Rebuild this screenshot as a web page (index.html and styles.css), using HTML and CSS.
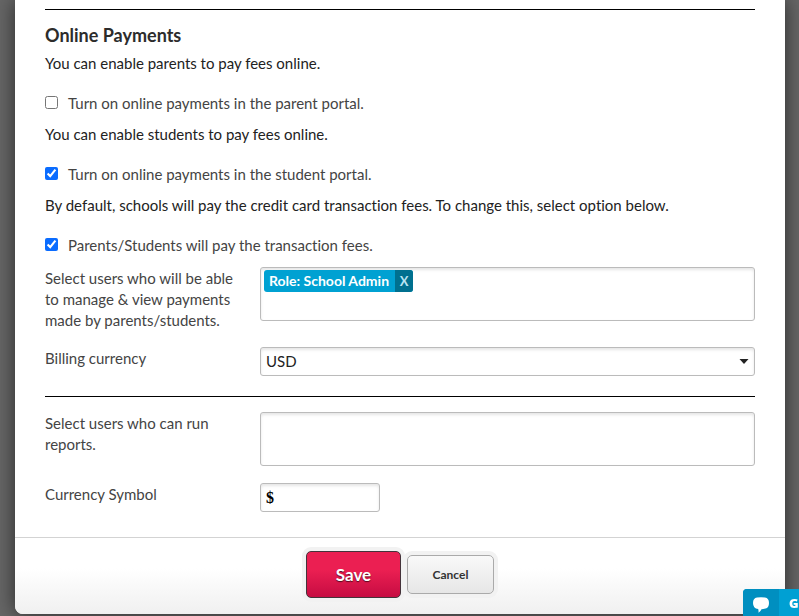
FILE: index.html
```html
<!DOCTYPE html>
<html lang="en">
<head>
    <meta charset="UTF-8">
    <meta name="viewport" content="width=device-width, initial-scale=1.0">
    <title>Online Payments</title>
    <link rel="stylesheet" href="styles.css">
</head>
<body>
    <form class="modal">
        <div class="content">
            <hr class="divider">
            <h2 class="title">Online Payments</h2>

            <p class="info">You can enable parents to pay fees online.</p>
            <label class="check">
                <input type="checkbox" name="parentPortal">
                Turn on online payments in the parent portal.
            </label>

            <p class="info">You can enable students to pay fees online.</p>
            <label class="check">
                <input type="checkbox" name="studentPortal" checked>
                Turn on online payments in the student portal.
            </label>

            <p class="info">By default, schools will pay the credit card transaction fees. To change this, select option below.</p>
            <label class="check">
                <input type="checkbox" name="payFees" checked>
                Parents/Students will pay the transaction fees.
            </label>

            <div class="row">
                <label class="label" for="managers">Select users who will be able to manage &amp; view payments made by parents/students.</label>
                <div class="field users">
                    <span class="tag">Role: School Admin<button type="button" class="remove">X</button></span>
                    <input type="text" id="managers" class="search">
                </div>
            </div>
            <div class="row">
                <label class="label" for="currency">Billing currency</label>
                <div class="select">
                    <select id="currency" class="field">
                        <option>USD</option>
                    </select>
                    <svg class="arrow" width="10" height="5" viewBox="0 0 10 5"><path d="M0.5 0h9L5 5z" fill="#222"/></svg>
                </div>
            </div>

            <hr class="divider">

            <div class="row">
                <label class="label" for="reports">Select users who can run reports.</label>
                <div class="field users">
                    <input type="text" id="reports" class="search">
                </div>
            </div>
            <div class="row">
                <label class="label" for="symbol">Currency Symbol</label>
                <input type="text" id="symbol" class="field symbol" value="$">
            </div>
        </div>

        <div class="footer">
            <button type="button" class="button save">Save</button>
            <button type="button" class="button cancel">Cancel</button>
        </div>
    </form>

    <button type="button" class="chat">
        <span class="chat-icon">
            <svg width="16" height="16" viewBox="0 0 16 16"><path d="M4 0.5Q8 0 12 0.5Q16 1.2 16 6Q16 10.8 12.5 11.6Q10 12.2 8.500 12.2Q7.500 14.500 5.500 15.800Q5.800 14 5.200 12Q0 11.500 0 6Q0 1 4 0.500z" fill="#fff"/></svg>
        </span>
        <span class="chat-text">G</span>
    </button>
</body>
</html>
```
FILE: styles.css
```css
* {
    box-sizing: border-box;
}

body {
    margin: 0;
    background: #666;
    color: #222;
    font-family: Lato, "Liberation Sans", sans-serif;
    font-size: 15px;
    font-variant-ligatures: none;
    line-height: 21px;
    overflow: hidden;
}

.modal {
    margin: 0 14px 2px 15px;
    background: #fff;
    border-radius: 0 0 8px 8px;
    box-shadow: 0 0 20px rgba(0, 0, 0, .6);
}

.content {
    padding: 9px 30px 25px;
}

.divider {
    height: 1px;
    margin: 20px 0 15px;
    border: none;
    background: #000;
}

.divider:first-child {
    margin: 0 0 13px;
}

.title {
    margin: 0 0 6px;
    color: #2c2c2c;
    font-size: 18px;
    line-height: 24px;
}

.info {
    margin: 0 0 19px;
}

.check {
    display: flex;
    align-items: flex-start;
    gap: 10px;
    margin-bottom: 10px;
    color: #444;
}

.check:has(+ .row) {
    margin-bottom: 11px;
}

.check input {
    width: 13px;
    height: 13px;
    margin: 3px 0 0;
    accent-color: #0a6cff;
}

.row {
    display: flex;
    align-items: flex-start;
    margin-bottom: 15px;
}

.row:has(.users) {
    min-height: 56px;
}

.row:has(+ .divider),
.row:last-child {
    margin-bottom: 0;
}

.label {
    flex: none;
    width: 215px;
    padding: 1px 20px 1px 0;
    color: #444;
}

.field {
    width: 100%;
    height: 29px;
    border: 1px solid #bbb;
    border-radius: 3px;
    background: #fff;
    box-shadow: inset 0 2px 3px rgba(0, 0, 0, .1);
    color: #222;
    font: inherit;
}

.users {
    display: flex;
    align-items: flex-start;
    height: 54px;
    padding: 2px 3px;
}

.tag {
    display: flex;
    flex: none;
    padding-left: 5px;
    border-radius: 3px;
    background: #00a1d2;
    color: #fff;
    font-size: 14px;
    font-weight: bold;
    line-height: 22px;
    overflow: hidden;
}

.remove {
    width: 18px;
    margin-left: 6px;
    padding: 0;
    border: none;
    background: #00708f;
    color: #b8e4f2;
    font: inherit;
    font-size: 13px;
}

.search {
    flex: 1;
    min-width: 0;
    border: none;
    outline: none;
    background: none;
    font: inherit;
}

.select {
    position: relative;
    flex: 1;
}

.select .field {
    display: block;
    padding: 0 24px 0 5px;
    appearance: none;
}

.arrow {
    position: absolute;
    top: 12px;
    right: 6px;
    pointer-events: none;
}

.symbol {
    width: 120px;
    padding: 1px 5px 0;
    color: #000;
    font-family: "Liberation Serif", serif;
    font-size: 16px;
    font-weight: bold;
}

.footer {
    display: flex;
    justify-content: center;
    align-items: center;
    gap: 6px;
    padding: 13px 0 16px;
    border-top: 1px solid #d3d3d3;
    border-radius: 0 0 8px 8px;
    background: linear-gradient(#fff 40%, #f0f0f0);
}

.button {
    border-radius: 5px;
    box-shadow: 0 0 0 4px #f2f2f2;
    font-family: inherit;
    font-weight: bold;
}

.save {
    position: relative;
    width: 95px;
    height: 47px;
    border: 1px solid #44333a;
    background: linear-gradient(#eb1f52 40%, #c60c42);
    color: #fff;
    font-size: 17px;
    text-shadow: 0 1px 1px rgba(0, 0, 0, .6);
}

.cancel {
    width: 87px;
    height: 39px;
    border: 1px solid #aaa;
    background: linear-gradient(#f9f9f9, #e6e6e6);
    color: #333;
    font-size: 12px;
}

.chat {
    position: fixed;
    right: 0;
    bottom: 0;
    display: flex;
    width: 56px;
    height: 27px;
    padding: 0;
    border: none;
    border-radius: 4px 0 0 0;
    background: #00a0d3;
    color: #fff;
    font-family: "Open Sans", sans-serif;
    font-size: 13px;
    font-weight: 800;
    overflow: hidden;
}

.chat-icon {
    flex: none;
    width: 36px;
    height: 27px;
    padding: 8px 10px 0;
    background: #008fc0;
}

.chat-text {
    padding-left: 10px;
    line-height: 29px;
}
```
